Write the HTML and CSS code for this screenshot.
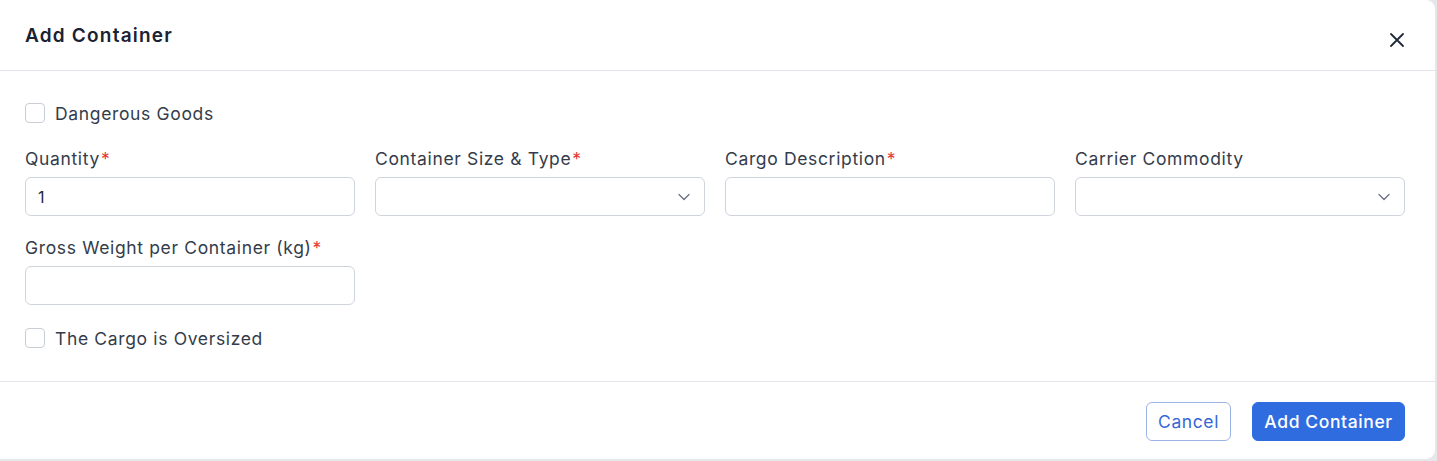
FILE: index.html
```html
<!DOCTYPE html>
<html>
<head>
<meta charset="utf-8">
<link rel="stylesheet" href="styles.css">
</head>
<body>
<div class="modal">
  <div class="modal-header">
    <h2 class="modal-title">Add Container</h2>
    <button class="close-btn" aria-label="Close">
      <svg width="16" height="16" viewBox="0 0 16 16"><path d="M2 2 L14 14 M14 2 L2 14" stroke="#1f2937" stroke-width="1.8" stroke-linecap="round" fill="none"/></svg>
    </button>
  </div>
  <div class="modal-body">
    <label class="check-row"><span class="checkbox"></span><span>Dangerous Goods</span></label>
    <div class="grid">
      <div class="field">
        <div class="label">Quantity<span class="req">*</span></div>
        <div class="input">1</div>
      </div>
      <div class="field">
        <div class="label">Container Size &amp; Type<span class="req">*</span></div>
        <div class="input select"><svg class="chev" width="12" height="8" viewBox="0 0 12 8"><path d="M1 1.5 L6 6.5 L11 1.5" stroke="#6b7280" stroke-width="1.3" fill="none" stroke-linecap="round" stroke-linejoin="round"/></svg></div>
      </div>
      <div class="field">
        <div class="label">Cargo Description<span class="req">*</span></div>
        <div class="input"></div>
      </div>
      <div class="field">
        <div class="label">Carrier Commodity</div>
        <div class="input select"><svg class="chev" width="12" height="8" viewBox="0 0 12 8"><path d="M1 1.5 L6 6.5 L11 1.5" stroke="#6b7280" stroke-width="1.3" fill="none" stroke-linecap="round" stroke-linejoin="round"/></svg></div>
      </div>
      <div class="field">
        <div class="label">Gross Weight per Container (kg)<span class="req">*</span></div>
        <div class="input"></div>
      </div>
    </div>
    <label class="check-row"><span class="checkbox"></span><span>The Cargo is Oversized</span></label>
  </div>
  <div class="modal-footer">
    <button class="btn btn-outline">Cancel</button>
    <button class="btn btn-primary">Add Container</button>
  </div>
</div>
</body>
</html>
```

FILE: styles.css
```css
html, body {
  margin: 0;
  padding: 0;
}
body {
  background: #e5e7eb;
  font-family: Inter, "Open Sans", sans-serif;
  color: #343c4b;
  width: 1437px;
  height: 461px;
  overflow: hidden;
}
.modal {
  width: 1435px;
  height: 459px;
  background: #fff;
  border-radius: 0 9px 9px 0;
  display: flex;
  flex-direction: column;
}
.modal-header {
  height: 71px;
  box-sizing: border-box;
  border-bottom: 1px solid #e2e5ea;
  display: flex;
  align-items: center;
  justify-content: space-between;
  padding: 0 30px 0 25px;
}
.modal-title {
  margin: 0;
  font-size: 19px;
  font-weight: 600;
  color: #1a2233;
  letter-spacing: 1.2px;
  margin-top: 0;
}
.close-btn {
  border: 0;
  background: none;
  padding: 0;
  width: 16px;
  height: 16px;
  margin-top: 9px;
  display: flex;
}
.modal-body {
  padding: 32px 25px 0;
  height: 311px;
  box-sizing: border-box;
  border-bottom: 1px solid #e2e5ea;
}
.check-row {
  display: flex;
  align-items: center;
  gap: 10px;
  font-size: 17.5px;
  color: #343c4b;
  letter-spacing: 0.65px;
  height: 20px;
}
.checkbox {
  width: 18px;
  height: 18px;
  border: 1px solid #c9ced6;
  border-radius: 4px;
  background: #fff;
}
.grid {
  display: grid;
  grid-template-columns: repeat(4, 330px);
  column-gap: 20px;
  row-gap: 21px;
  margin-top: 25px;
  margin-bottom: 23px;
}
.field {
  display: flex;
  flex-direction: column;
}
.label {
  font-size: 17.5px;
  letter-spacing: 0.65px;
  color: #343c4b;
  height: 20px;
  line-height: 22px;
  margin-bottom: 9px;
}
.req {
  color: #e53935;
  margin-left: 1px;
  letter-spacing: 0;
}
.input {
  height: 39px;
  box-sizing: border-box;
  border: 1px solid #cfd4dc;
  border-radius: 6px;
  padding: 0 12px;
  display: flex;
  align-items: center;
  font-size: 16px;
  color: #1f2937;
}
.select {
  justify-content: flex-end;
  padding-right: 14px;
}
.modal-footer {
  flex: 1;
  display: flex;
  justify-content: flex-end;
  align-items: center;
  gap: 21px;
  padding: 2px 30px 0 25px;
}
.btn {
  height: 39px;
  border-radius: 6px;
  font-family: Inter, "Open Sans", sans-serif;
  font-size: 17.5px;
  letter-spacing: 0.6px;
  padding: 0;
  cursor: pointer;
}
.btn-outline {
  background: #fff;
  border: 1px solid #9bb4e6;
  color: #3569d6;
  width: 85px;
}
.btn-primary {
  background: #2f6ce0;
  border: 1px solid #2f6ce0;
  color: #fff;
  font-weight: 500;
  width: 153px;
}
```
